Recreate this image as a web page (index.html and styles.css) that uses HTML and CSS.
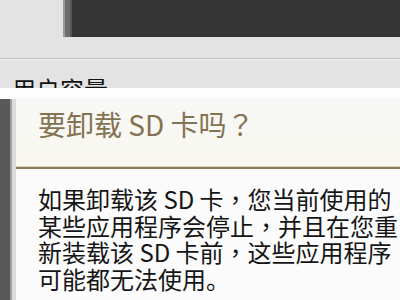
FILE: index.html
```html
<!DOCTYPE html>
<html lang="zh-CN">
<head>
<meta charset="utf-8">
<link rel="stylesheet" href="styles.css">
</head>
<body>
<div class="screen">
  <div class="top">
    <div class="panel"></div>
    <div class="rule"></div>
    <div class="label">用户容量</div>
  </div>
  <div class="overlay">
    <div class="strip"></div>
    <div class="dialog">
      <div class="title">要卸载 SD 卡吗<span class="fw" lang="zh-TW">？</span></div>
      <div class="divider"></div>
      <div class="body">
        <div class="line">如果卸载该 SD 卡<span class="fw" lang="zh-TW">，</span>您当前使用的</div>
        <div class="line">某些应用程序会停止<span class="fw" lang="zh-TW">，</span>并且在您重</div>
        <div class="line">新装载该 SD 卡前<span class="fw" lang="zh-TW">，</span>这些应用程序</div>
        <div class="line">可能都无法使用。</div>
      </div>
    </div>
  </div>
</div>
</body>
</html>
```
FILE: styles.css
```css
html, body {
  margin: 0;
  padding: 0;
}
body {
  width: 400px;
  height: 300px;
  overflow: hidden;
  font-family: "Noto Sans CJK SC", "Noto Sans", sans-serif;
}
.screen {
  display: flex;
  flex-direction: column;
  width: 400px;
  height: 300px;
}
.top {
  height: 88px;
  flex-shrink: 0;
  background: #e3e3e3;
  overflow: hidden;
  display: flex;
  flex-direction: column;
}
.top > * {
  flex-shrink: 0;
}
.panel {
  margin-left: 63px;
  height: 37px;
  background: linear-gradient(to right, #9a9a9a 0 2px, #6c6c6c 2px 7px, #555 7px 9px, #343434 9px);
}
.rule {
  margin-top: 21px;
  height: 1px;
  background: #bdbdbd;
  border-bottom: 1px solid #f0f0f0;
}
.label {
  margin-top: 17px;
  margin-left: 12px;
  font-size: 24px;
  line-height: 24px;
  color: #111;
  white-space: nowrap;
}
.overlay {
  flex: 1;
  background: #fdfdfd;
  padding-top: 10px;
  display: flex;
}
.strip {
  width: 10px;
  margin-top: 1px;
  background: #585858;
  border-right: 2px solid #a0a0a0;
  box-shadow: 4px 0 0 #dcdcdc;
  margin-right: 4px;
}
.dialog {
  flex: 1;
  background: #fafaf9;
  display: flex;
  flex-direction: column;
}
.title {
  padding: 12px 0 28px 22px;
  font-size: 28px;
  line-height: 28px;
  color: #847352;
  white-space: nowrap;
  background: linear-gradient(to bottom, #f7f7f6, #f9f8f0);
}
.fw {
  font-family: "Noto Sans CJK TC", "Noto Sans CJK SC", sans-serif;
}
.divider {
  height: 2px;
  background: #8a7d5b;
  border-top: 1px solid #ddd5b8;
}
.body {
  padding: 17px 0 0 22px;
  font-size: 24px;
  color: #151515;
  background: #fbfbfb;
  flex: 1;
  display: flex;
  flex-direction: column;
}
.line {
  height: 26.6px;
  line-height: 26.6px;
  white-space: nowrap;
}
```
